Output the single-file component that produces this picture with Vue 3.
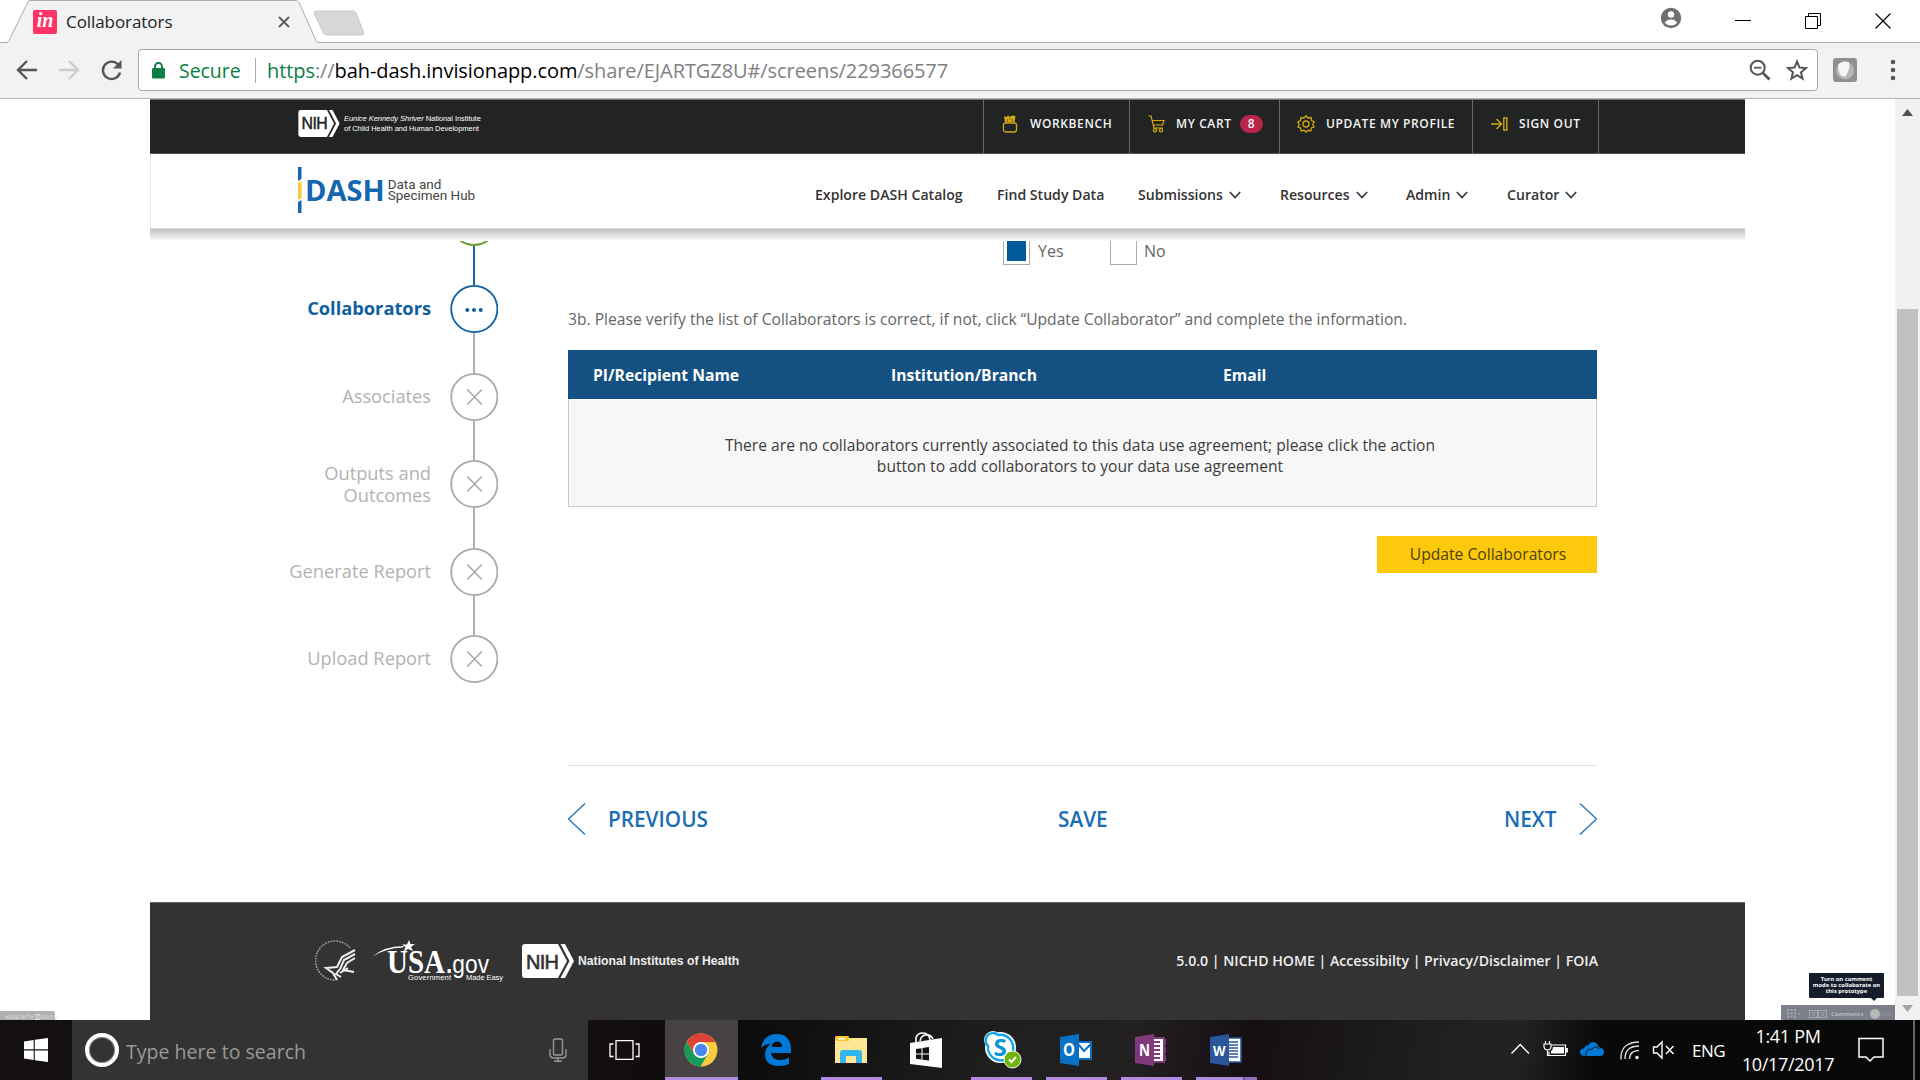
<template>
  <div class="screen">
    <div class="tab-strip">
      <svg class="tab-shape" width="380" height="43" viewBox="0 0 380 43">
        <path d="M0 42.5H8L28 1.5Q28.5 .5 30 .5H296Q298 .5 299 2.500L317 41Q317.500 42.500 320 42.500H380V43H0Z" fill="#f2f2f2" />
        <path d="M0 42.500H6Q8 42.500 9 40.500L28 2Q28.500 .5 30 .5H296Q298 .5 299 2.500L316 40.500Q317 42.500 319 42.500H380" fill="none" stroke="#adadad" />
        <path d="M316 11H353Q355 11 356 13L363.500 32Q364.500 35 361.500 35H327Q324.500 35 323.500 33L314.500 14Q313.500 11 316 11Z" fill="#d8d8d8" stroke="#c8c8c8" />
      </svg>
      <div class="tab">
        <span class="favicon">in</span>
        <span class="tab-title">Collaborators</span>
        <svg width="12" height="12" viewBox="0 0 12 12"><path d="M1 1L11 11M11 1L1 11" stroke="#5a5a5a" stroke-width="1.8" /></svg>
      </div>
      <div class="window-controls">
        <svg width="22" height="22" viewBox="0 0 22 22">
          <circle cx="11" cy="11" r="10.200" fill="#6f6f6f" />
          <circle cx="11" cy="7.500" r="3.200" fill="#fff" />
          <path d="M4.800 15.500Q7 12.600 11 12.600T17.200 15.500Q15 18.500 11 18.500T4.800 15.500Z" fill="#fff" />
        </svg>
        <svg width="16" height="16" viewBox="0 0 16 16"><path d="M0 7.500H16" stroke="#000" /></svg>
        <svg width="16" height="16" viewBox="0 0 16 16"><path d="M.5 3.500H12.500V15.500H.5ZM3.500 3V.5H15.500V12.500H13" fill="none" stroke="#000" /></svg>
        <svg width="16" height="16" viewBox="0 0 16 16"><path d="M.5 .5L15.500 15.500M15.500 .5L.5 15.500" stroke="#000" stroke-width="1.200" /></svg>
      </div>
    </div>

    <div class="toolbar">
      <svg class="nav-icons" width="110" height="24" viewBox="0 0 110 24" fill="none" stroke-width="2.400">
        <path d="M21 12H2M11 3L2 12L11 21" stroke="#555" />
        <path d="M43 12H62M53 3L62 12L53 21" stroke="#ccc" />
        <path d="M102.500 7A8.700 8.700 0 1 0 104 14.500" stroke="#555" />
        <path d="M105.500 2V10.500H97Z" fill="#555" stroke="none" />
      </svg>
      <div class="omnibox">
        <svg width="13" height="17" viewBox="0 0 13 17">
          <rect y="6" width="13" height="10.500" rx="1.200" fill="#0b8043" />
          <path d="M3 7V4.500a3.500 3.500 0 0 1 7 0V7" fill="none" stroke="#0b8043" stroke-width="1.900" />
        </svg>
        <span class="secure">Secure</span>
        <span class="url"><b>https</b>://<i>bah-dash.invisionapp.com</i>/share/EJARTGZ8U#/screens/229366577</span>
        <svg class="zoom-icon" width="22" height="22" viewBox="0 0 22 22" fill="none" stroke="#555">
          <circle cx="8.700" cy="8.700" r="7" stroke-width="2" />
          <path d="M5 8.700H12.400" stroke-width="1.800" />
          <path d="M13.700 13.700L20.500 20.500" stroke-width="2.800" />
        </svg>
        <svg width="22" height="22" viewBox="0 0 22 22"><path d="M11 2.500L13.500 8.600L20 9.100L15 13.300L16.600 19.700L11 16.200L5.400 19.700L7 13.300L2 9.100L8.500 8.600Z" fill="none" stroke="#555" stroke-width="2" /></svg>
      </div>
      <svg class="extension" width="24" height="24" viewBox="0 0 24 24">
        <rect width="24" height="24" rx="3" fill="#909090" />
        <circle cx="12" cy="12.500" r="9" fill="#b5b5b5" />
        <path d="M5 7Q9 2 16 4Q18 11 12 19Q5 19 5 7Z" fill="#f5f5f5" />
      </svg>
      <svg width="6" height="22" viewBox="0 0 6 22" fill="#555"><circle cx="3" cy="3" r="2.300" /><circle cx="3" cy="11" r="2.300" /><circle cx="3" cy="19" r="2.300" /></svg>
    </div>

    <div class="viewport">
      <div class="page">
        <header class="topbar">
          <div class="nih-small">
            <svg width="42" height="27" viewBox="0 0 52 34">
              <path d="M3 0H36L45 17L36 34H3Q0 34 0 31V3Q0 0 3 0Z" fill="#fff" />
              <path d="M38.500 0H43L52 17L43 34H38.500L47.500 17Z" fill="#fff" />
              <text x="4" y="24.500" textLength="33" font-size="20" stroke="#222423" stroke-width=".6" fill="#222423" font-family="Liberation Sans, sans-serif">NIH</text>
            </svg>
            <p><em>Eunice Kennedy Shriver</em> National Institute<br>of Child Health and Human Development</p>
          </div>
          <div class="top-item workbench">
            <svg width="16" height="18" viewBox="0 0 16 18" fill="none" stroke="#d3a914" stroke-width="1.300">
              <path d="M3 8H13Q14.500 8 14.500 10V14.500Q14.500 17 12 17H4Q1.500 17 1.500 14.500V10Q1.500 8 3 8Z" />
              <path d="M3 7L2 1L4.500 2L6 .5L8 2L10 .5L13.500 1L12.500 7Z" fill="#d3a914" stroke="none" />
              <path d="M5.500 4V7M8 3V5M10.500 4V7" stroke="#222423" stroke-width=".5" />
            </svg>
            <span>WORKBENCH</span>
          </div>
          <div class="top-item cart">
            <svg width="17" height="18" viewBox="0 0 17 18" fill="none" stroke="#d3a914" stroke-width="1.200">
              <path d="M.5 1H3L6 13H15M4.500 5.500H16L14.500 10H5.500" /><circle cx="7" cy="15.300" r="1.600" /><circle cx="13" cy="15.300" r="1.600" />
            </svg>
            <span>MY CART</span>
            <span class="badge">8</span>
          </div>
          <div class="top-item profile">
            <svg width="18" height="18" viewBox="0 0 18 18" fill="none" stroke="#d3a914" stroke-width="1.300">
              <path d="M9 .8L11 3L14 2.500L14.600 5.500L17.200 7L15.800 9.500L17 12L14.500 13L13.700 16L11 15.300L9 17.200L7 15.300L4.300 16L3.500 13L1 12L2.200 9.500L.8 7L3.400 5.500L4 2.500L7 3Z" /><circle cx="9" cy="9" r="3" />
            </svg>
            <span>UPDATE MY PROFILE</span>
          </div>
          <div class="top-item signout">
            <svg width="17" height="14" viewBox="0 0 17 14" fill="none" stroke="#d3a914" stroke-width="1.400"><path d="M0 7H10M5.500 2L10.500 7L5.500 12M12.800 1H15.800V13H12.800Z" /></svg>
            <span>SIGN OUT</span>
          </div>
        </header>

        <nav class="main-nav">
          <div class="dash-logo">
            <svg width="4" height="46" viewBox="0 0 4 46"><path d="M0 0H3.500V12L0 14Z" fill="#1568b0" /><path d="M0 16L3.500 14V31L0 33Z" fill="#fcc636" /><path d="M0 35L3.500 33V46H0Z" fill="#1568b0" /></svg>
            <strong>DASH</strong>
            <span class="dash-sub"><span>Data and</span><span>Specimen Hub</span></span>
          </div>
          <a v-for="link in links" :key="link.label" :style="{ width: link.width + 'px' }">
            {{ link.label }}
            <svg v-if="link.menu" width="12" height="8" viewBox="0 0 12 8"><path d="M.8 1L6 6.500L11.200 1" fill="none" stroke="#333" stroke-width="1.600" /></svg>
          </a>
        </nav>
        <div class="nav-shadow"></div>

        <div class="body">
          <aside class="steps">
            <svg class="done-arc" width="48" height="5" viewBox="0 43 48 5"><circle cx="24" cy="24" r="23" fill="none" stroke="#729c3c" stroke-width="2" /></svg>
            <template v-for="step in steps" :key="step.label">
              <div class="connector" :class="{ active: step.active }"></div>
              <div class="step" :class="{ active: step.active }">
                <span class="step-label">{{ step.label }}</span>
                <svg width="48" height="48" viewBox="0 0 48 48">
                  <circle cx="24.300" cy="24" r="23.100" fill="#fff" stroke="currentColor" stroke-width="1.800" />
                  <g v-if="step.active" fill="currentColor"><circle cx="17.300" cy="25" r="2" /><circle cx="24" cy="25" r="2" /><circle cx="30.700" cy="25" r="2" /></g>
                  <path v-else d="M17.300 16.500L31.800 31.500M31.800 16.500L17.300 31.500" stroke="currentColor" stroke-width="1.700" />
                </svg>
              </div>
            </template>
          </aside>

          <main class="content">
            <div class="choices">
              <span class="box checked"></span><span class="choice yes">Yes</span>
              <span class="box"></span><span class="choice">No</span>
            </div>
            <p class="question">3b. Please verify the list of Collaborators is correct, if not, click “Update Collaborator” and complete the information.</p>
            <div class="table">
              <div class="table-head"><span>PI/Recipient Name</span><span>Institution/Branch</span><span>Email</span></div>
              <div class="table-empty">
                There are no collaborators currently associated to this data use agreement; please click the action<br>
                button to add collaborators to your data use agreement
              </div>
            </div>
            <button class="update-btn" type="button">Update Collaborators</button>
            <div class="pager">
              <svg width="18" height="32" viewBox="0 0 18 32"><path d="M17 .5L.5 16L17 31.500" fill="none" stroke="#2a78bd" stroke-width="1.400" /></svg>
              <span class="prev">PREVIOUS</span>
              <span class="save">SAVE</span>
              <span class="next">NEXT</span>
              <svg width="18" height="32" viewBox="0 0 18 32"><path d="M1 .5L17.500 16L1 31.500" fill="none" stroke="#2a78bd" stroke-width="1.400" /></svg>
            </div>
          </main>
        </div>

        <footer class="footer">
          <svg class="hhs" width="42" height="42" viewBox="0 0 42 42" fill="none" stroke="#eee">
            <path d="M35 8A19.500 19.500 0 1 0 21 40" stroke="#999" stroke-width="1.600" stroke-dasharray="1.800 1" />
            <path d="M40 10L27 17L22 27L11 28L18 33L22 40M40 14L29 20L25 29L21 34L26 37M40 18L32 23L28 30L39 32M33 28L25 33" stroke-width="2" />
          </svg>
          <svg class="usa" width="134" height="42" viewBox="0 0 134 42" fill="#fff">
            <path d="M0 17Q12 6 32 6L31 7.500Q13 8 0 17Z" />
            <path d="M37 0L38.500 4L43 4L39 7L41 11L36 9L31.500 12L33.500 7L30 4.500L35 4.500Z" />
            <text x="15" y="33" textLength="58" lengthAdjust="spacingAndGlyphs" font-size="33" font-weight="bold" font-family="Liberation Serif, serif">USA</text>
            <text x="74" y="33" textLength="43" lengthAdjust="spacingAndGlyphs" font-size="26" font-family="Liberation Sans, sans-serif"><tspan font-weight="bold">.</tspan>gov</text>
            <text x="36" y="39.500" textLength="43" font-size="7.500" font-family="Liberation Sans, sans-serif">Government</text>
            <text x="94" y="39.500" textLength="37" font-size="7.500" font-family="Liberation Sans, sans-serif">Made Easy</text>
          </svg>
          <svg class="nih" width="52" height="34" viewBox="0 0 52 34">
            <path d="M3 0H36L45 17L36 34H3Q0 34 0 31V3Q0 0 3 0Z" fill="#fff" />
            <path d="M38.500 0H43L52 17L43 34H38.500L47.500 17Z" fill="#fff" />
            <text x="4" y="24.500" textLength="33" font-size="20" stroke="#333" stroke-width=".6" fill="#333" font-family="Liberation Sans, sans-serif">NIH</text>
          </svg>
          <span class="nih-name">National Institutes of Health</span>
          <span class="footer-links">5.0.0 | NICHD HOME | Accessibilty | Privacy/Disclaimer | FOIA</span>
        </footer>
      </div>

      <div class="scrollbar">
        <svg width="11" height="7" viewBox="0 0 11 7"><path d="M0 7L5.500 0L11 7Z" fill="#505050" /></svg>
        <div class="thumb"></div>
        <svg width="11" height="7" viewBox="0 0 11 7"><path d="M0 0L5.500 7L11 0Z" fill="#a3a3a3" /></svg>
      </div>

      <div class="made-with">MADE WITH <b>IN</b>VISION</div>
      <div class="tooltip">Turn on comment<br>mode to collaborate on<br>this prototype</div>
      <div class="comment-bar">
        <svg width="14" height="9" viewBox="0 0 14 9" fill="#a6a9b0"><path d="M0 0H2V2H0ZM3.500 0H5.500V2H3.500ZM7 0H9V2H7ZM0 3.300H2V5.300H0ZM3.500 3.300H5.500V5.300H3.500ZM7 3.300H9V5.300H7ZM0 6.600H2V8.600H0ZM3.500 6.600H5.500V8.600H3.500ZM7 6.600H9V8.600H7ZM11 5.500L12.500 3.500L14 5.500Z" /></svg>
        <span class="count">0</span><span class="count">0</span>
        <span class="comments">Comments</span>
        <span class="knob"></span><span class="off">OFF</span>
      </div>
    </div>

    <div class="taskbar">
      <div class="start">
        <svg width="24" height="24" viewBox="0 0 24 24" fill="#fff"><path d="M0 3.400L9.700 2V11.300H0ZM10.800 1.800L24 0V11.300H10.800ZM0 12.500H9.700V21.900L0 20.600ZM10.800 12.500H24V24L10.800 22.200Z" /></svg>
      </div>
      <div class="search">
        <span class="cortana"></span>
        <span class="search-text">Type here to search</span>
        <svg width="18" height="24" viewBox="0 0 18 24" fill="none" stroke="#999" stroke-width="1.400"><rect x="4.500" y="1" width="9" height="16" rx="1.500" /><path d="M1 11V16.500Q1 20 4.500 20H13.500Q17 20 17 16.500V11M9 20V23.200M5 23.200H13" /></svg>
      </div>
      <div class="task-view">
        <svg width="31" height="20" viewBox="0 0 31 20" fill="none" stroke="#fff" stroke-width="1.300"><path d="M7 .7H24V19.300H7ZM4.500 4H1V16.500H4.500M26.500 4H30V16.500H26.500" /></svg>
      </div>
      <div class="app running current">
        <svg width="34" height="34" viewBox="0 0 34 34">
          <circle cx="17" cy="17" r="16.500" fill="#fcca3f" />
          <path d="M2.700 8.700A16.500 16.500 0 0 1 31.500 9H17L10 21Z" fill="#dc4437" />
          <path d="M2.700 8.700L10 21L17 25L16.500 33.500A16.500 16.500 0 0 1 2.700 8.700Z" fill="#149b59" />
          <path d="M17 25L24 21L16.500 33.500L13 33Z" fill="#149b59" />
          <circle cx="17" cy="17" r="8" fill="#fff" /><circle cx="17" cy="17" r="6.200" fill="#4a87ee" />
        </svg>
      </div>
      <div class="app">
        <svg width="30" height="32" viewBox="0 0 30 32"><path d="M0 14C2 4 8 0 16 0C25 0 30 6 30 15V19H10Q11 26 19 26Q24 26 28 23.500V30Q24 32 18 32Q4 32 4 20Q4 14 10 9.500Q4 10 0 14ZM10.500 13H21Q21 7.500 16 7.500Q11.500 7.500 10.500 13Z" fill="#0078d7" fill-rule="evenodd" /></svg>
      </div>
      <div class="app running">
        <svg width="32" height="28" viewBox="0 0 32 28"><path d="M0 2Q0 0 2 0H12Q14 0 14 2H32V27H0Z" fill="#ffe695" /><path d="M0 5V2Q0 0 2 0H12Q14 0 14 2V5Z" fill="#f9c62b" /><path d="M3 2H10V3.500H3Z" fill="#fff" /><path d="M5 27V17Q5 14 8 14H24Q27 14 27 17V27H21V20H11V27Z" fill="#33b5ed" /></svg>
      </div>
      <div class="app store">
        <svg width="32" height="36" viewBox="0 0 32 36"><path d="M6 10V6Q7 1 13 1Q19 1 20 8M10 9Q11 4 15 3Q21 2 23 7" fill="none" stroke="#fff" stroke-width="1.600" /><path d="M0 11L32 6V36L0 32Z" fill="#fff" /><path d="M6 17L11.500 16.200V21.500H6ZM12.500 16L19 15V21.500H12.500ZM6 22.500H11.500V27.500L6 26.800ZM12.500 22.500H19V28.600L12.500 27.700Z" fill="#111" /></svg>
      </div>
      <div class="app running skype">
        <svg width="38" height="38" viewBox="0 0 38 38">
          <circle cx="9" cy="9" r="9" fill="#fff" /><circle cx="23" cy="23" r="9" fill="#fff" /><circle cx="16.500" cy="16.500" r="15.500" fill="#fff" />
          <path d="M4 15A6.500 6.500 0 0 1 14 4A13 13 0 0 1 29 19A7 7 0 0 1 20 29A13 13 0 0 1 4 15Z" fill="#fff" stroke="#11a6e9" stroke-width="2.400" />
          <text x="9.500" y="25" font-size="24" font-weight="bold" fill="#0795d5" font-family="Open Sans, sans-serif">S</text>
          <circle cx="28.500" cy="28.500" r="8.500" fill="#6eb40b" stroke="#fff" /><path d="M25 28.500L27.500 31L32 26" fill="none" stroke="#fff" stroke-width="2" />
        </svg>
      </div>
      <div class="app running">
        <svg width="32" height="32" viewBox="0 0 32 32"><path d="M17 8H31V25H17Z" fill="#fff" stroke="#0a70c4" stroke-width="2" /><path d="M18 10L24 17L31 10" fill="none" stroke="#0a70c4" stroke-width="2" /><path d="M0 3L19 0V32L0 29Z" fill="#0a70c4" /><text x="3" y="22" font-size="17" font-weight="bold" fill="#fff" font-family="Open Sans, sans-serif" textLength="12" lengthAdjust="spacingAndGlyphs">O</text></svg>
      </div>
      <div class="app running">
        <svg width="32" height="32" viewBox="0 0 32 32"><path d="M17 4H29V28H17ZM30 5V11M30 13V19M30 21V27" fill="#fff" stroke="#80397b" stroke-width="2" /><path d="M19 8H25M19 12H25M19 16H25M19 20H25M19 24H25" stroke="#80397b" stroke-width="2" /><path d="M0 3L19 0V32L0 29Z" fill="#80397b" /><text x="4" y="22" font-size="16" font-weight="bold" fill="#fff" font-family="Open Sans, sans-serif" textLength="11" lengthAdjust="spacingAndGlyphs">N</text></svg>
      </div>
      <div class="app running word">
        <svg width="32" height="32" viewBox="0 0 32 32"><path d="M17 4H31V28H17Z" fill="#fff" stroke="#2b579a" stroke-width="1.600" /><path d="M19 8H28M19 11H28M19 14H28M19 17H28M19 20H28M19 23H28" stroke="#2b579a" stroke-width="1.500" /><path d="M0 3L19 0V32L0 29Z" fill="#2b579a" /><text x="3" y="21.500" font-size="15" font-weight="bold" fill="#fff" font-family="Open Sans, sans-serif" textLength="12.500" lengthAdjust="spacingAndGlyphs">W</text></svg>
      </div>
      <div class="tray">
        <svg width="164" height="20" viewBox="0 0 164 20" fill="none" stroke="#fff" stroke-width="1.400">
          <path d="M.5 13.500L9.200 4.500L18 13.500" />
          <path d="M40.500 5H54.500V15.500H38V11.500" stroke-width="1.200" /><path d="M42 7H53V13.500H40V11Q42 10 42 7Z" fill="#fff" stroke="none" /><path d="M56 8V12.500" stroke-width="1.800" />
          <path d="M33 4H40V7Q39.500 10 36.500 10T33 7ZM34.500 4V1M38.500 4V1M36.500 10V15.500H38.500" stroke-width="1.200" />
          <path d="M74 16Q69 16 69 12Q69 8.500 73 8.500Q74 5 77.500 5Q80 1 84 2.500Q87 3.500 87.500 7Q93 8 93 12Q93 16 89 16Z" fill="#0078d7" stroke="none" /><path d="M75 16Q74 9 81 9Q85 5 88 9" stroke="#111" stroke-width="1" />
          <path d="M110 19.500Q109.500 9 116 5Q121 2 128 2M114 19Q114 11 119 8Q123 6 128 6M118.500 19Q119 13.500 122 12Q124.500 10.500 128 10.500" stroke="#ddd" /><circle cx="126" cy="17.500" r="1.700" fill="#fff" stroke="none" />
          <path d="M142.500 7H146L151 2V18L146 13H142.500ZM155 6L162.500 14M162.500 6L155 14" />
        </svg>
        <span class="lang">ENG</span>
        <div class="clock"><span>1:41 PM</span><span>10/17/2017</span></div>
        <svg class="action" width="26" height="26" viewBox="0 0 26 26"><path d="M1 1.500H25V20H16L12 24L8 20H1Z" fill="none" stroke="#fff" stroke-width="1.500" /></svg>
        <span class="peek"></span>
      </div>
    </div>
  </div>
</template>

<script setup>
const links = [
  { label: 'Explore DASH Catalog', width: 182 },
  { label: 'Find Study Data', width: 141 },
  { label: 'Submissions', width: 142, menu: true },
  { label: 'Resources', width: 126, menu: true },
  { label: 'Admin', width: 101, menu: true },
  { label: 'Curator', width: 90, menu: true }
]

const steps = [
  { label: 'Collaborators', active: true },
  { label: 'Associates' },
  { label: 'Outputs and Outcomes' },
  { label: 'Generate Report' },
  { label: 'Upload Report' }
]
</script>

<style>
body {
  background: #fff;
  overflow: hidden;
}
</style>

<style scoped>
.screen {
  width: 1920px;
  height: 1080px;
  overflow: hidden;
  display: flex;
  flex-direction: column;
  background: #fff;
  font-family: "Open Sans", "Noto Sans", sans-serif;
}

.screen * {
  box-sizing: border-box;
}

svg {
  display: block;
  flex: none;
}

.tab-strip {
  position: relative;
  display: flex;
  justify-content: space-between;
  height: 43px;
  flex: none;
  border-bottom: 1px solid #adadad;
}

.tab-shape {
  position: absolute;
  left: 0;
  top: 0;
}

.tab {
  position: relative;
  display: flex;
  align-items: center;
  width: 290px;
  height: 43px;
  padding-left: 33px;
}

.favicon {
  width: 24px;
  height: 24px;
  border-radius: 2px;
  background: #ff3366;
  color: #fff;
  font: italic bold 20px/21px "Liberation Serif", serif;
  text-align: center;
}

.tab-title {
  flex: 1;
  margin-left: 9px;
  font-size: 17px;
  letter-spacing: -0.07px;
  color: #222;
}

.window-controls {
  display: flex;
  align-items: center;
  height: 41px;
  padding-right: 29px;
  gap: 54px;
}

.window-controls svg:first-child {
  margin: -6px -1px 0 0;
}

.toolbar {
  display: flex;
  align-items: center;
  height: 56px;
  flex: none;
  padding-bottom: 1px;
  background: #f2f2f2;
  border-bottom: 1px solid #b4b4b4;
}

.nav-icons {
  margin: 0 12px 0 16px;
}

.omnibox {
  display: flex;
  align-items: center;
  width: 1680px;
  height: 42px;
  padding: 0 9px 0 13px;
  border: 1px solid #a8a8a8;
  border-radius: 4px;
  background: #fff;
}

.secure {
  width: 77px;
  height: 25px;
  margin-left: 14px;
  border-right: 1px solid #aaa;
  color: #0b8043;
  font-size: 19.5px;
  line-height: 25px;
  letter-spacing: -0.05px;
}

.url {
  flex: 1;
  margin-left: 11px;
  color: #808080;
  font-size: 20px;
  letter-spacing: -0.08px;
  white-space: nowrap;
}

.url b {
  font-weight: normal;
  color: #0b8043;
}

.url i {
  font-style: normal;
  color: #000;
}

.zoom-icon {
  margin-right: 15px;
}

.extension {
  margin: 0 33px 0 15px;
}

.viewport {
  position: relative;
  display: flex;
  justify-content: space-between;
  height: 921px;
  flex: none;
  overflow: hidden;
  background: #fff;
}

.page {
  width: 1595px;
  margin-left: 150px;
}

.topbar {
  display: flex;
  height: 55px;
  padding-right: 146px;
  background: #222423;
  border-top: 1px solid #777;
  border-bottom: 1px solid #555;
}

.nih-small {
  display: flex;
  flex: 1;
  padding: 10px 0 0 148px;
}

.nih-small p {
  margin: 4px 0 0 4px;
  color: #fff;
  font: 7.5px/10px "Liberation Sans", sans-serif;
  letter-spacing: -0.04px;
  white-space: nowrap;
}

.top-item {
  display: flex;
  align-items: center;
  padding: 0 0 6px 18px;
  border-left: 1px solid #686a69;
  color: #f4f4f4;
  font-size: 12px;
  font-weight: 600;
  letter-spacing: 0.62px;
  white-space: nowrap;
}

.top-item svg {
  margin-right: 11px;
}

.workbench {
  width: 146px;
}

.workbench span {
  margin-left: 1px;
}

.cart {
  width: 150px;
}

.profile {
  width: 193px;
  padding-left: 17px;
}

.signout {
  width: 127px;
  border-right: 1px solid #686a69;
}

.badge {
  width: 23px;
  height: 18px;
  margin-left: 8px;
  border-radius: 9px;
  background: #b82548;
  font-size: 12px;
  line-height: 17px;
  letter-spacing: 0;
  text-align: center;
}

.main-nav {
  display: flex;
  align-items: center;
  height: 75px;
  padding-left: 147px;
  background: #fff;
  border-bottom: 1px solid #ddd;
  border-left: 1px solid #e8e8e8;
  color: #333;
}

.main-nav a {
  display: flex;
  align-items: center;
  gap: 6px;
  padding-top: 7px;
  font-size: 14.1px;
  font-weight: 600;
  white-space: nowrap;
}

.dash-logo {
  display: flex;
  align-items: center;
  width: 517px;
  margin-top: -2px;
  color: #1568b0;
}

.dash-logo strong {
  margin: 0 3px 0 3px;
  font-size: 29px;
  line-height: 30px;
}

.dash-sub {
  display: flex;
  flex-direction: column;
  color: #444;
  font: 13.5px/11px Roboto, sans-serif;
}

.nav-shadow {
  height: 12px;
  background: linear-gradient(#c0c0c0, #fdfdfd);
}

.body {
  display: flex;
  height: 661px;
}

.steps {
  width: 418px;
}

.done-arc {
  margin-left: 300px;
}

.connector {
  width: 2px;
  height: 39.4px;
  margin-left: 323px;
  background: #b0b0b0;
}

.connector.active {
  background: #1568b0;
}

.step {
  display: flex;
  align-items: center;
  width: 348px;
  height: 48px;
  color: #aaa;
}

.step-label {
  width: 151px;
  margin: -1px 19px 0 130px;
  padding-left: 6px;
  flex: none;
  color: #b2b2b2;
  font-size: 18.25px;
  line-height: 22px;
  text-align: right;
}

.step.active {
  color: #0f5f9f;
}

.step.active .step-label {
  margin-top: -2px;
  color: #0f5f9f;
  font-weight: bold;
}

.content {
  width: 1029px;
}

.choices {
  display: flex;
  height: 24px;
  padding-left: 435px;
  color: #666;
  font-size: 16px;
  line-height: 20px;
}

.box {
  width: 27px;
  height: 24px;
  margin-right: 8px;
  padding: 0 3px;
  border: 1px solid #aaa;
  border-top: 0;
}

.checked::before {
  content: "";
  display: block;
  height: 20px;
  background: #00599a;
}

.yes {
  width: 72px;
}

.choice + .box + .choice {
  margin-left: -1px;
}

.question {
  margin: 43px 0 0;
  color: #666;
  font-size: 15.65px;
  line-height: 22px;
  white-space: nowrap;
}

.table {
  height: 157px;
  margin-top: 20px;
  border: 1px solid #c8cacb;
  border-top: 0;
  background: #f7f7f7;
}

.table-head {
  display: grid;
  grid-template-columns: 298px 332px 1fr;
  align-items: center;
  height: 49px;
  margin: 0 -1px;
  padding: 1px 0 0 25px;
  background: #145082;
  color: #fff;
  font-size: 15.7px;
  font-weight: bold;
}

.table-empty {
  padding: 36px 5px 0 0;
  color: #3c3c3c;
  font-size: 15.62px;
  line-height: 21px;
  text-align: center;
}

.update-btn {
  display: block;
  width: 220px;
  height: 37px;
  margin: 29px 0 0 auto;
  padding: 0 0 1px 2px;
  border: 0;
  background: #fcc90c;
  color: #4d430f;
  font: 15.65px "Open Sans", sans-serif;
}

.pager {
  display: flex;
  align-items: center;
  margin-top: 192px;
  padding-top: 37px;
  border-top: 1px solid #e0e0e0;
  color: #1b6db5;
  font-size: 20.75px;
  font-weight: 600;
}

.pager span {
  padding-bottom: 1px;
  line-height: 30px;
}

.prev {
  width: 450px;
  margin-left: 22px;
}

.save {
  flex: 1;
}

.next {
  width: 75px;
}

.footer {
  display: flex;
  align-items: flex-start;
  height: 119px;
  padding: 37px 147px 0 165px;
  background: #333;
  border-top: 1px solid #666;
}

.usa {
  margin-left: 15px;
}

.nih {
  margin: 4px 4px 0 16px;
}

.nih-name {
  margin-top: 12px;
  color: #eee;
  font: bold 12.2px/18px "Liberation Sans", sans-serif;
}

.footer-links {
  margin: 11px 0 0 auto;
  color: #eee;
  font-size: 14.13px;
  font-weight: 600;
  line-height: 20px;
}

.scrollbar {
  display: flex;
  flex-direction: column;
  align-items: center;
  width: 25px;
  padding: 10px 0 8px;
  background: #f1f1f1;
}

.thumb {
  width: 21px;
  height: 688px;
  margin: 193px 0 9px;
  background: #c1c1c1;
}

.made-with {
  position: absolute;
  left: 0;
  bottom: 0;
  width: 55px;
  height: 9px;
  padding-left: 5px;
  border-radius: 0 2px 0 0;
  background: #b0b0b0;
  color: #ddd;
  font: 5px/12px "Liberation Sans", sans-serif;
  white-space: nowrap;
}

.made-with b {
  background: #ddd;
  color: #b0b0b0;
}

.tooltip {
  position: absolute;
  left: 1809px;
  top: 874px;
  width: 75px;
  height: 25px;
  padding-top: 3px;
  border-radius: 1px;
  background: #151c2b;
  color: #fff;
  font: bold 5.8px/6px "Open Sans", sans-serif;
  text-align: center;
  white-space: nowrap;
}

.tooltip::after {
  content: "";
  position: absolute;
  left: 62px;
  top: 25px;
  border: 3px solid transparent;
  border-top-color: #151c2b;
}

.comment-bar {
  position: absolute;
  left: 1781px;
  bottom: 0;
  display: flex;
  align-items: center;
  width: 114px;
  height: 15px;
  padding: 2px 0 0 6px;
  background: #7c808a;
  color: #b4b7bd;
  font-size: 6px;
}

.count {
  width: 9px;
  height: 8px;
  border: 1px solid #a6a9b0;
  line-height: 6px;
  text-align: center;
}

.comment-bar svg {
  margin-right: 8px;
}

.comments {
  margin: 0 8px 0 4px;
  font-weight: bold;
}

.knob {
  width: 10px;
  height: 10px;
  margin-left: -1px;
  border-radius: 50%;
  background: #b8b8b8;
}

.off {
  color: #979aa2;
}

.taskbar {
  display: flex;
  height: 60px;
  flex: none;
  background: linear-gradient(100deg, #110d0e 0%, #160f11 30%, #0b0b0b 38%, #202020 53%, #222021 59%, #150f13 65%, #202020 75%, #222 79%, #090909 83%, #080808 100%);
}

.start {
  display: grid;
  place-items: center;
  width: 72px;
  background: #140f10;
}

.search {
  display: flex;
  align-items: center;
  width: 516px;
  padding: 0 21px 0 13px;
  background: #333;
}

.cortana {
  width: 34px;
  height: 34px;
  border: 4px solid #fff;
  border-radius: 50%;
  box-shadow: inset 0 0 0 1px #888;
}

.search-text {
  flex: 1;
  margin: 2px 0 0 7px;
  color: #999;
  font-size: 19.5px;
  letter-spacing: 0.03px;
}

.task-view {
  display: flex;
  align-items: center;
  width: 76px;
  padding-left: 21px;
}

.app {
  position: relative;
  display: grid;
  place-items: center;
  width: 75px;
  padding-right: 2px;
}

.running::after {
  content: "";
  position: absolute;
  left: 7px;
  bottom: 0;
  width: 61px;
  height: 3px;
  background: #b18be0;
}

.current {
  margin: 0 1px;
  width: 73px;
  background: #474344;
}

.current::after {
  left: 0;
  width: 73px;
}

.skype {
  padding: 0 0 0 2px;
}

.word::after {
  background: linear-gradient(90deg, #b18be0 47px, #6e5690 47px, #6e5690 49px, #8f72b5 49px);
}

.tray {
  display: flex;
  align-items: center;
  width: 409px;
  margin-left: auto;
  color: #fff;
}

.lang {
  width: 50px;
  margin-left: 17px;
  font-size: 17px;
  letter-spacing: -0.5px;
}

.clock {
  display: flex;
  flex-direction: column;
  align-items: center;
  width: 92px;
  margin: 0 24px 0 0;
  font-size: 18px;
  line-height: 28px;
  letter-spacing: -0.33px;
  white-space: nowrap;
}

.peek {
  width: 2px;
  height: 60px;
  margin-left: 29px;
  background: #666;
}
</style>
